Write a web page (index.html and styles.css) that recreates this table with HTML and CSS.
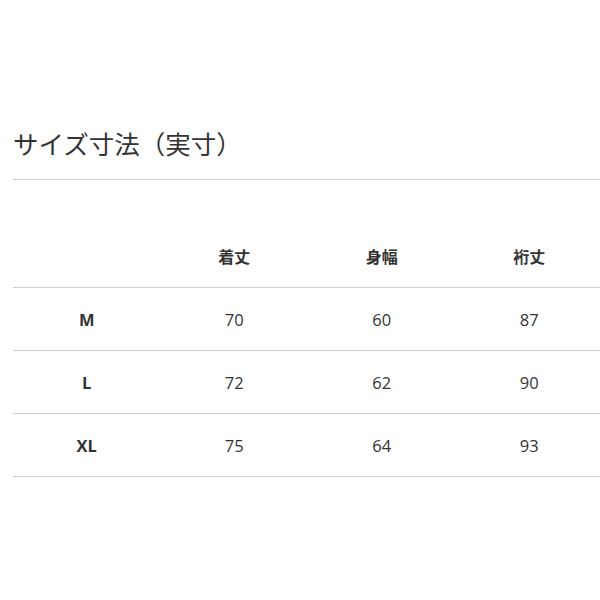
FILE: index.html
```html
<!DOCTYPE html>
<html lang="ja">
<head>
<meta charset="utf-8">
<link rel="stylesheet" href="styles.css">
</head>
<body>
<div class="page">
  <h2 class="title">サイズ寸法（実寸）</h2>
  <div class="table">
    <div class="row head">
      <div class="cell"></div>
      <div class="cell">着丈</div>
      <div class="cell">身幅</div>
      <div class="cell">裄丈</div>
    </div>
    <div class="row">
      <div class="cell size">M</div>
      <div class="cell">70</div>
      <div class="cell">60</div>
      <div class="cell">87</div>
    </div>
    <div class="row">
      <div class="cell size">L</div>
      <div class="cell">72</div>
      <div class="cell">62</div>
      <div class="cell">90</div>
    </div>
    <div class="row">
      <div class="cell size">XL</div>
      <div class="cell">75</div>
      <div class="cell">64</div>
      <div class="cell">93</div>
    </div>
  </div>
</div>
</body>
</html>
```
FILE: styles.css
```css
html, body { margin: 0; padding: 0; background: #fff; overflow: hidden; }
body {
  font-family: "Open Sans", "Noto Sans CJK JP", sans-serif;
  color: #333;
}
.page { padding-left: 13px; }
.title {
  margin: 125px 0 0 0;
  font-size: 25.5px;
  line-height: 36px;
  font-weight: 400;
  padding-bottom: 18px;
  border-bottom: 1px solid #ccc;
  font-family: "Noto Sans CJK JP", sans-serif;
  color: #333;
}
.table { margin-top: 45px; }
.row {
  display: grid;
  grid-template-columns: repeat(4, 147.5px);
  height: 62px;
  border-bottom: 1px solid #ccc;
  align-items: center;
}
.cell {
  text-align: center;
  font-size: 16.5px;
}
.head .cell { font-weight: 700; font-family: "Noto Sans CJK JP", sans-serif; font-size: 16px; }
.size { font-weight: 700; }
```
